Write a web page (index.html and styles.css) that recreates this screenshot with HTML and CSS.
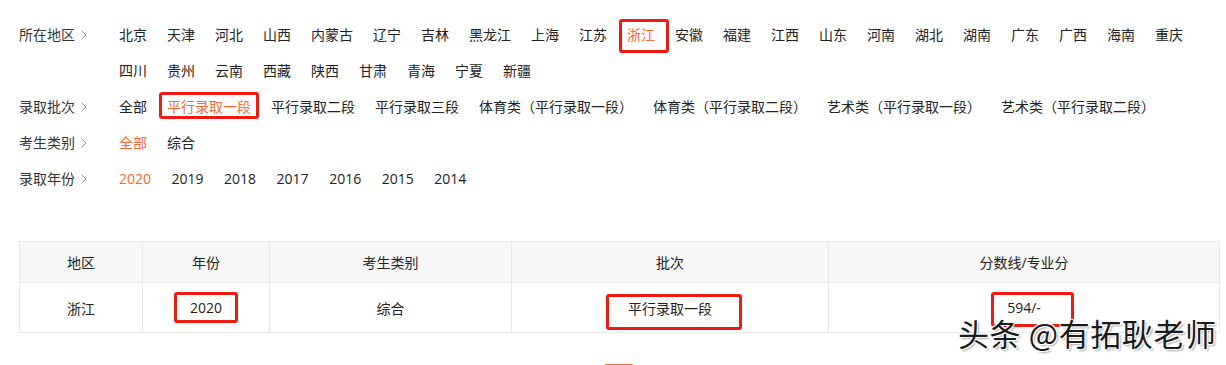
FILE: index.html
```html
<!DOCTYPE html>
<html lang="zh-CN">
<head>
<meta charset="utf-8">
<title>分数线</title>
<link rel="stylesheet" href="styles.css">
</head>
<body>
<div class="page">
  <div class="filters">
    <div class="frow">
      <div class="flabel">所在地区<svg class="chev" width="6" height="10" viewBox="0 0 6 10"><polyline points="0.5,0.5 5,5 0.5,9.5" /></svg></div>
      <div class="fitems">
        <span>北京</span><span>天津</span><span>河北</span><span>山西</span><span>内蒙古</span><span>辽宁</span><span>吉林</span><span>黑龙江</span><span>上海</span><span>江苏</span><span class="on">浙江</span><span>安徽</span><span>福建</span><span>江西</span><span>山东</span><span>河南</span><span>湖北</span><span>湖南</span><span>广东</span><span>广西</span><span>海南</span><span>重庆</span><span>四川</span><span>贵州</span><span>云南</span><span>西藏</span><span>陕西</span><span>甘肃</span><span>青海</span><span>宁夏</span><span>新疆</span>
      </div>
    </div>
    <div class="frow">
      <div class="flabel">录取批次<svg class="chev" width="6" height="10" viewBox="0 0 6 10"><polyline points="0.5,0.5 5,5 0.5,9.5" /></svg></div>
      <div class="fitems">
        <span>全部</span><span class="on">平行录取一段</span><span>平行录取二段</span><span>平行录取三段</span><span>体育类（平行录取一段）</span><span>体育类（平行录取二段）</span><span>艺术类（平行录取一段）</span><span>艺术类（平行录取二段）</span>
      </div>
    </div>
    <div class="frow">
      <div class="flabel">考生类别<svg class="chev" width="6" height="10" viewBox="0 0 6 10"><polyline points="0.5,0.5 5,5 0.5,9.5" /></svg></div>
      <div class="fitems">
        <span class="on">全部</span><span>综合</span>
      </div>
    </div>
    <div class="frow">
      <div class="flabel">录取年份<svg class="chev" width="6" height="10" viewBox="0 0 6 10"><polyline points="0.5,0.5 5,5 0.5,9.5" /></svg></div>
      <div class="fitems years">
        <span class="on">2020</span><span>2019</span><span>2018</span><span>2017</span><span>2016</span><span>2015</span><span>2014</span>
      </div>
    </div>
  </div>

  <table class="score">
    <colgroup>
      <col class="c1"><col class="c2"><col class="c3"><col class="c4"><col class="c5">
    </colgroup>
    <thead>
      <tr><th>地区</th><th>年份</th><th>考生类别</th><th>批次</th><th>分数线/专业分</th></tr>
    </thead>
    <tbody>
      <tr><td>浙江</td><td>2020</td><td>综合</td><td>平行录取一段</td><td>594/-</td></tr>
    </tbody>
  </table>

  <div class="pager"><span class="pg" aria-label="第1页"></span></div>

  <div class="mark m1"></div>
  <div class="mark m2"></div>
  <div class="mark m3"></div>
  <div class="mark m4"></div>
  <div class="mark m5"></div>
  <div class="watermark">头条 @有拓耿老师</div>
</div>
</body>
</html>
```

FILE: styles.css
```css
* { box-sizing: border-box; }
html, body { margin: 0; padding: 0; background: #fff; }
body {
  font-family: "Open Sans", "Noto Sans CJK SC", sans-serif;
  font-size: 14px;
  color: #333;
  overflow: hidden;
}
.page {
  position: relative;
  width: 1226px;
  height: 365px;
  overflow: hidden;
  padding: 17px 7px 0 19px;
}
.filters { display: flex; flex-direction: column; }
.frow { display: flex; align-items: flex-start; }
.flabel {
  width: 100px;
  flex: none;
  height: 36px;
  line-height: 36px;
  display: flex;
  align-items: center;
  color: #333;
}
.chev { margin-left: 6px; fill: none; stroke: #999; stroke-width: 1; }
.fitems {
  flex: 1;
  display: flex;
  flex-wrap: wrap;
  column-gap: 20px;
}
.fitems span { height: 36px; line-height: 36px; white-space: nowrap; color: #222; }
.fitems span.on { color: #f7692c; }
.years { column-gap: 20.5px; }

.score {
  margin-top: 44px;
  width: 1200px;
  border-collapse: collapse;
  table-layout: fixed;
}
.c1 { width: 123px; }
.c2 { width: 127px; }
.c3 { width: 242px; }
.c4 { width: 317px; }
.c5 { width: 391px; }
.score th, .score td {
  border: 1px solid #e8e8e8;
  text-align: center;
  font-weight: normal;
  color: #222;
  padding: 0;
}
.score th { height: 41px; background: #f7f7f7; }
.score td { height: 50px; }

.pager { display: flex; justify-content: center; width: 1200px; margin-top: 31px; }
.pg {
  display: block;
  width: 30px;
  height: 30px;
  border: 1px solid #f7692c;
  border-radius: 2px;
  background: #fff;
}

.mark {
  position: absolute;
  border: 3px solid #f01a10;
  border-radius: 3px;
}
.m1 { left: 619px; top: 19px; width: 50px; height: 34px; }
.m2 { left: 159px; top: 92px; width: 100px; height: 27px; }
.m3 { left: 174px; top: 292px; width: 64px; height: 31px; }
.m4 { left: 606px; top: 294px; width: 136px; height: 36px; }
.m5 { left: 991px; top: 292px; width: 83px; height: 35px; }

.watermark {
  position: absolute;
  left: 958px;
  top: 313px;
  font-family: "Noto Sans CJK SC", sans-serif;
  font-size: 31px;
  letter-spacing: 0.6px;
  line-height: 40px;
  color: #1a1a1a;
  white-space: nowrap;
  text-shadow: 1px 1px 0 #fff, -1px -1px 0 #fff, 1px -1px 0 #fff, -1px 1px 0 #fff, 2px 2px 2px rgba(0,0,0,0.35);
}
```
